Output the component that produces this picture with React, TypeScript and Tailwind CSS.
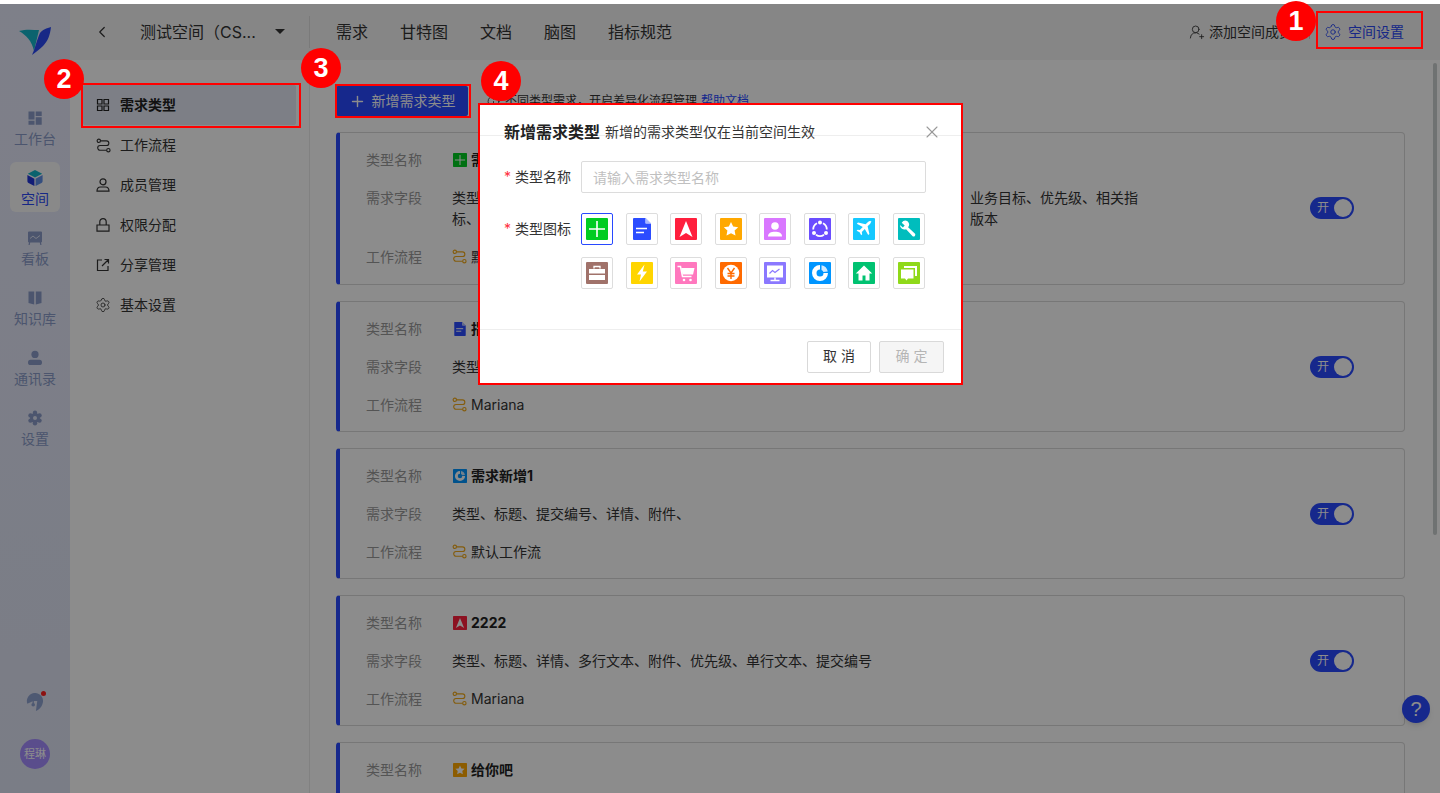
import { ReactNode } from "react";
import { ChevronLeft, Plus, Settings, UserRoundPlus, X, Info } from "lucide-react";

const cjk = "font-['Inter','Noto_Sans_CJK_SC',sans-serif]";

const FlowIcon = ({ className }: { className?: string }) => (
  <svg viewBox="0 0 16 16" fill="none" stroke="currentColor" strokeWidth="1.2" className={className}>
    <circle cx="3" cy="3" r="1.8" />
    <circle cx="13.2" cy="13" r="1.8" />
    <path d="M4.8 3h6.4a2.5 2.5 0 0 1 0 5H4.3a2.5 2.5 0 0 0 0 5h7" />
  </svg>
);

const glyphs: Record<string, { bg: string; glyph: ReactNode }> = {
  plus: {
    bg: "#00cc22",
    glyph: <path d="M11 3v16M3 11h16" stroke="#fff" strokeWidth="1.6" fill="none" />,
  },
  doc: {
    bg: "transparent",
    glyph: (
      <>
        <path d="M2.5 0h12L20 5.5V21a1 1 0 0 1-1 1H3a1 1 0 0 1-1-1V.5z" fill="#2b4cff" />
        <path d="M14.5 0L20 5.5h-5.5z" fill="#fff" />
        <path d="M15 0.6L19.4 5H15z" fill="#a9b8ff" />
        <path d="M5 10.5h11M5 14.5h8" stroke="#fff" strokeWidth="1.5" />
      </>
    ),
  },
  arrow: { bg: "#ff1f3d", glyph: <path d="M11 3L17.500 19L11 15L4.500 19z" fill="#fff" /> },
  star: {
    bg: "#ffa800",
    glyph: <path d="M11 4l2.200 4.500 5 .7-3.600 3.400.9 5L11 15.200l-4.500 2.400.9-5-3.600-3.400 5-.7z" fill="#fff" />,
  },
  user: {
    bg: "#d977ff",
    glyph: (
      <>
        <circle cx="11" cy="8" r="3.800" fill="#fff" />
        <path d="M4 18.500c0-3.500 3-4.800 7-4.800s7 1.300 7 4.800z" fill="#fff" />
      </>
    ),
  },
  ring: {
    bg: "#6a4dff",
    glyph: (
      <>
        <path d="M8 5.300a7 7 0 0 0-3.800 6.300M14 5.300a7 7 0 0 1 3.800 6.300M7 16.800a7 7 0 0 0 8 0" fill="none" stroke="#fff" strokeWidth="1.800" />
        <circle cx="11" cy="4.600" r="2" fill="#fff" />
        <circle cx="5" cy="15" r="2" fill="#fff" />
        <circle cx="17" cy="15" r="2" fill="#fff" />
      </>
    ),
  },
  plane: {
    bg: "#14c8ff",
    glyph: (
      <path
        d="M18.500 3.500c-1-1-2.500-.6-3.500.4l-2.400 2.400L5 4.500 3.800 5.700l6 3.400-3 3-2.200-.4-1 1 3 1.600 1.600 3 1-1-.4-2.200 3-3 3.400 6 1.200-1.200-1.800-7.600 2.400-2.400c1-1 1.400-2.500.5-3.400z"
        fill="#fff"
      />
    ),
  },
  wrench: {
    bg: "#00bdbd",
    glyph: (
      <path
        d="M9.500 3.200a4.600 4.600 0 0 0-5.800 1.600l3 2.600-1.800 2-3-2.400a4.600 4.600 0 0 0 6.200 4.200l6.300 6.800c.7.700 1.800.7 2.400 0 .7-.6.700-1.700 0-2.400l-6.700-6.300a4.600 4.600 0 0 0-.6-6.100z"
        fill="#fff"
      />
    ),
  },
  case: {
    bg: "#a0726a",
    glyph: (
      <>
        <path d="M8 6.500V4.500h6v2" stroke="#fff" strokeWidth="1.300" fill="none" />
        <path d="M3 7h16v4.600H3zM3 13h16v5H3z" fill="#fff" />
      </>
    ),
  },
  bolt: { bg: "#ffd500", glyph: <path d="M13.500 2.500L6 12.500H10L8.500 19.500L16 9.500H11.800z" fill="#fff" /> },
  cart: {
    bg: "#ff78be",
    glyph: (
      <>
        <path d="M2.500 4.500h3l2 10h9" stroke="#fff" strokeWidth="1.500" fill="none" />
        <path d="M6.200 6h13.300l-1.500 6.500H7.500z" fill="#fff" />
        <circle cx="9" cy="18" r="1.300" fill="#fff" />
        <circle cx="15.500" cy="18" r="1.300" fill="#fff" />
      </>
    ),
  },
  yen: {
    bg: "#ff6a00",
    glyph: (
      <>
        <circle cx="11" cy="11" r="8.300" fill="#fff" />
        <path d="M7.500 6l3.500 5 3.500-5M11 11v6M7.500 11.500h7M7.500 14h7" stroke="#ff6a00" strokeWidth="1.400" fill="none" />
      </>
    ),
  },
  screen: {
    bg: "#8b78ff",
    glyph: (
      <>
        <rect x="3" y="3.500" width="16" height="12" fill="#fff" />
        <path d="M5.500 11.500l3-3 2.500 2 4.500-3.500" stroke="#8b78ff" strokeWidth="1.200" fill="none" />
        <path d="M11 15.500v2.500M6.500 18.500h9" stroke="#fff" strokeWidth="1.400" />
      </>
    ),
  },
  pie: {
    bg: "#0095ff",
    glyph: (
      <>
        <path d="M11 3a8 8 0 1 0 8 8h-4.500A3.500 3.500 0 1 1 11 7.500z" fill="#fff" />
        <path d="M12.500 3.200A8 8 0 0 1 18.800 9.500l-4.400.4a3.600 3.600 0 0 0-1.900-2z" fill="#cfeaff" />
      </>
    ),
  },
  home: {
    bg: "#00c271",
    glyph: <path d="M11 3.500L2.800 11.500h2.700V18.500h4v-5h3v5h4v-7h2.700z" fill="#fff" />,
  },
  chat: {
    bg: "#8fd919",
    glyph: (
      <>
        <path d="M6 4h13v10h-2V6H6z" fill="#fff" />
        <path d="M3 7.500h12.500v9H10l-1.500 2-1.500-2H3z" fill="#fff" />
      </>
    ),
  },
};

const pickerIcons = ["plus", "doc", "arrow", "star", "user", "ring", "plane", "wrench", "case", "bolt", "cart", "yen", "screen", "pie", "home", "chat"];

const TypeIcon = ({ name, size }: { name: string; size: number }) => {
  const icon = glyphs[name];
  return (
    <svg viewBox="0 0 22 22" width={size} height={size} className="shrink-0">
      <rect width="22" height="22" rx="1" fill={icon.bg} />
      {icon.glyph}
    </svg>
  );
};

const navItems: { label: string; active?: boolean; icon: ReactNode }[] = [
  {
    label: "工作台",
    icon: (
      <svg viewBox="0 0 16 16" className="size-4 fill-current">
        <path d="M1.500 1.500h6v8h-6zM8.700 1.500h6v4.500h-6zM1.500 10.700h6v4h-6zM8.700 7.200h6v7.500h-6z" />
      </svg>
    ),
  },
  {
    label: "空间",
    active: true,
    icon: (
      <svg viewBox="0 0 16 16" className="size-4">
        <path d="M8 0l7.200 3.800L8 7.600.8 3.800z" fill="#14b5c9" />
        <path d="M.4 5l7 3.700V16l-5.900-3A2 2 0 0 1 .4 11.200z" fill="#2236d8" />
        <path d="M15.600 5l-7 3.700V16l5.900-3a2 2 0 0 0 1.100-1.800z" fill="#5f8fe8" />
      </svg>
    ),
  },
  {
    label: "看板",
    icon: (
      <svg viewBox="0 0 16 16" className="size-4 fill-current">
        <path d="M2 1.500h12a1 1 0 0 1 1 1v9a1 1 0 0 1-1 1l.5 2.500h-1.200l-.5-2.500H3.200l-.5 2.500H1.500l.5-2.500a1 1 0 0 1-1-1v-9a1 1 0 0 1 1-1z" />
        <path d="M3 8.500l3-2.500 3 2.500 4-3" stroke="#dfe3f4" strokeWidth="1" fill="none" />
      </svg>
    ),
  },
  {
    label: "知识库",
    icon: (
      <svg viewBox="0 0 16 16" className="size-4 fill-current">
        <path d="M1.500 1.500h5.700v13L1.500 13zM8.800 1.500h5.700V13l-5.700 1.500z" />
      </svg>
    ),
  },
  {
    label: "通讯录",
    icon: (
      <svg viewBox="0 0 16 16" className="size-4 fill-current">
        <circle cx="8" cy="4.400" r="3.600" />
        <rect x="1" y="9.800" width="14" height="5.200" rx="2.600" />
      </svg>
    ),
  },
  {
    label: "设置",
    icon: (
      <svg viewBox="0 0 16 16" className="size-4 fill-current">
        <circle cx="8" cy="8" r="5" />
        <circle cx="8" cy="2.800" r="2.200" />
        <circle cx="8" cy="13.200" r="2.200" />
        <circle cx="3.500" cy="5.400" r="2.200" />
        <circle cx="12.500" cy="5.400" r="2.200" />
        <circle cx="3.500" cy="10.600" r="2.200" />
        <circle cx="12.500" cy="10.600" r="2.200" />
        <circle cx="8" cy="8" r="2" fill="#dfe3f4" />
      </svg>
    ),
  },
];

const menuIconProps = {
  viewBox: "0 0 16 16",
  fill: "none",
  stroke: "currentColor",
  strokeWidth: 1.2,
  className: "size-4",
};

const menuItems: { label: string; icon: ReactNode; active?: boolean }[] = [
  {
    label: "需求类型",
    active: true,
    icon: (
      <svg {...menuIconProps}>
        <path d="M2.500 2.500h4.500v4.500h-4.500zM9 2.500h4.500v4.500H9zM2.500 9h4.500v4.500h-4.500zM9 9h4.500v4.500H9z" />
      </svg>
    ),
  },
  { label: "工作流程", icon: <FlowIcon className="size-[15px]" /> },
  {
    label: "成员管理",
    icon: (
      <svg {...menuIconProps}>
        <circle cx="8" cy="4.800" r="3" />
        <path d="M2 14.200c0-2.800 1.500-4.200 3.500-4.200h5c2 0 3.500 1.400 3.500 4.200z" />
      </svg>
    ),
  },
  {
    label: "权限分配",
    icon: (
      <svg {...menuIconProps}>
        <path d="M2 8h12v6.200H2zM4.800 8V4.800a3.200 3.200 0 0 1 6.400 0V8" />
      </svg>
    ),
  },
  {
    label: "分享管理",
    icon: (
      <svg {...menuIconProps}>
        <path d="M7 3H2.500v10.500H13V9M9.500 2.500h4v4M13.500 2.500L7 9" />
      </svg>
    ),
  },
  { label: "基本设置", icon: <Settings size={18} strokeWidth={1.2} /> },
];

const cards = [
  {
    name: "需求类型",
    icon: "plus",
    flow: "默认工作流",
    fields:
      "类型、标题、提交编号、详情、附件、负责人、处理人、开始时间、抄送人、模块、业务目标、优先级、相关指标、截止时间、预估工时、实际工时、所属迭代、所属项目、关联需求、需求来源、版本",
    extra: "pb-px",
  },
  { name: "指标需求", icon: "doc", flow: "Mariana", fields: "类型、标题、提交编号、详情、附件、" },
  { name: "需求新增1", icon: "pie", flow: "默认工作流", fields: "类型、标题、提交编号、详情、附件、" },
  { name: "2222", icon: "arrow", flow: "Mariana", fields: "类型、标题、详情、多行文本、附件、优先级、单行文本、提交编号" },
  { name: "给你吧", icon: "star", flow: "默认工作流", fields: "类型、标题、提交编号、详情、附件、" },
];

const TypeCard = ({ card }: { card: (typeof cards)[number] }) => (
  <div className={`flex shrink-0 items-center justify-between rounded-[4px] border border-[#d9d9d9] border-l-4 border-l-[#2849ff] pr-[50px] pl-[26px] ${card.extra ?? ""}`}>
    <div className="flex flex-col gap-[17px] py-[16px] text-sm leading-[21px]">
      <div className="flex">
        <span className="w-[86px] shrink-0 text-[#999]">类型名称</span>
        <span className="flex items-center gap-[4px] pl-px font-bold text-[#222]">
          <TypeIcon name={card.icon} size={14} />
          {card.name}
        </span>
      </div>
      <div className="flex">
        <span className="w-[86px] shrink-0 text-[#999]">需求字段</span>
        <span className="w-[690px] text-[#333]">{card.fields}</span>
      </div>
      <div className="flex">
        <span className="w-[86px] shrink-0 text-[#999]">工作流程</span>
        <span className="flex items-center gap-1 text-[#333]">
          <FlowIcon className="size-[15px] text-[#f0a818]" />
          {card.flow}
        </span>
      </div>
    </div>
    <div className="flex h-[22px] w-[44px] items-center justify-between rounded-full bg-[#2849ff] pr-[2px] pl-[7px] text-xs text-white">
      开<span className="size-[18px] rounded-full bg-white" />
    </div>
  </div>
);

const Badge = ({ n, className }: { n: number; className: string }) => (
  <div className={`absolute flex size-10 items-center justify-center rounded-full bg-[#ff0000] font-['Liberation_Sans',sans-serif] text-[27px] font-bold text-white ${className}`}>
    {n}
  </div>
);

const App = () => {
  return (
    <div className={`relative h-[793px] overflow-hidden bg-white pt-[4px] ${cjk}`}>
      <div className="relative flex h-[789px]">
        {/* left nav */}
        <aside className="flex w-[70px] shrink-0 flex-col items-center bg-gradient-to-b from-[#e6e9fa] to-[#dfe3f4] text-[#8a9bc8]">
          <svg viewBox="0 0 32 28" className="mt-[23px] -ml-px h-[28px] w-[32px] shrink-0">
            <path d="M0 4C7 2 14 3 20 3L15 24C13 14 7 8 0 4z" fill="#14b5c9" />
            <path d="M32 0C31 8 29 14 24 19C21 22 17 25 13 28C16 22 18 12 21 6C23 3 28 1 32 0z" fill="#2a49f5" />
          </svg>
          <div className="mt-[47px] flex flex-col items-center">
            {navItems.map((item) => (
              <div
                key={item.label}
                className={`mb-[10px] flex size-[50px] flex-col items-center rounded-md pt-[8px] text-sm leading-5 ${item.active ? "bg-[#fafafa] text-[#2a49f5]" : ""}`}
              >
                {item.icon}
                <span className="mt-[3px] whitespace-nowrap">{item.label}</span>
              </div>
            ))}
          </div>
          <div className="mt-auto flex flex-col items-center gap-[28px] pb-[24px]">
            <div className="relative">
              <svg viewBox="0 0 20 20" className="size-[18px]">
                <path d="M1.500 12A9 9 0 1 1 18 13C17 16 14 18.500 11 20L12.500 9H8L1.500 12z" fill="#8fa3d0" />
                <path d="M8 9v3" stroke="#8fa3d0" strokeWidth="1.500" />
                <circle cx="8" cy="13" r="2" fill="#8fa3d0" />
              </svg>
              <span className="absolute -top-[2px] -right-[2px] size-[5px] rounded-full bg-[#ff2020]" />
            </div>
            <div className="flex size-[30px] items-center justify-center rounded-full bg-[#a48cff] text-[11px] text-white">
              程琳
            </div>
          </div>
        </aside>

        <div className="flex min-w-0 flex-1 flex-col">
          {/* top bar */}
          <header className="flex h-[56px] shrink-0 items-center bg-[#f5f5f5] text-[#333]">
            <div className="flex h-full w-[239px] items-center pb-[1px]">
              <ChevronLeft size={18} strokeWidth={1.6} className="ml-[23px]" />
              <span className="ml-[29px] w-[122px] text-base whitespace-nowrap">测试空间（CS...</span>
              <span className="ml-[13px] size-0 border-x-[5px] border-t-[5px] border-x-transparent border-t-[#333]" />
            </div>
            <div className="h-[32px] w-px bg-[#dedede]" />
            <nav className="ml-[26px] flex gap-8 text-base">
              <span>需求</span>
              <span>甘特图</span>
              <span>文档</span>
              <span>脑图</span>
              <span>指标规范</span>
            </nav>
            <div className="ml-auto flex items-center pr-[36px] text-sm">
              <UserRoundPlus size={16} strokeWidth={1.3} />
              <span className="ml-[4px] whitespace-nowrap">添加空间成员</span>
              <span className="ml-[16px] h-[14px] w-px bg-[#ccc]" />
              <Settings size={18} strokeWidth={1.2} className="ml-[14px] text-[#2a49f5]" />
              <span className="ml-[6px] text-[#2a49f5]">空间设置</span>
            </div>
          </header>

          <div className="flex min-h-0 flex-1">
            {/* settings menu */}
            <div className="w-[240px] shrink-0 border-r border-[#ececec] px-[13px] pt-[25px] text-sm">
              {menuItems.map((item) => (
                <div
                  key={item.label}
                  className={`flex h-[40px] items-center gap-[9px] rounded-[2px] px-[12px] ${item.active ? "bg-[#e4e8f4] font-semibold text-[#222]" : "text-[#333]"}`}
                >
                  <span className="flex w-[16px] justify-center">{item.icon}</span>
                  {item.label}
                </div>
              ))}
            </div>

            {/* card list */}
            <main className="relative flex min-w-0 flex-1 flex-col gap-4 overflow-hidden pt-[26px] pr-[35px] pl-[26px]">
              <div className="flex shrink-0 items-center">
                <button className="flex h-[30px] w-[132px] items-center justify-center gap-[6px] rounded-[2px] bg-[#2849ff] text-sm text-white">
                  <Plus size={17} strokeWidth={2} />
                  新增需求类型
                </button>
                <Info size={13} strokeWidth={1.5} className="ml-[19px] text-[#333]" />
                <span className="ml-[5px] text-xs text-[#333]">不同类型需求，开启差异化流程管理</span>
                <span className="ml-[4px] text-xs text-[#2849ff]">帮助文档</span>
              </div>
              {cards.map((card) => (
                <TypeCard key={card.name} card={card} />
              ))}
              <div className="absolute top-[3px] right-[3px] h-[472px] w-[4px] rounded-full bg-[#cacfcf]" />
            </main>
          </div>
        </div>
      </div>

      <div className="absolute top-[695px] left-[1402px] flex size-7 items-center justify-center rounded-full bg-[#2849ff] font-['Liberation_Sans',sans-serif] text-xl text-white shadow-md">
        ?
      </div>

      {/* modal mask */}
      <div className="absolute inset-x-0 top-[4px] bottom-0 bg-black/45" />

      {/* modal */}
      <div className="absolute top-[103px] left-[478px] flex h-[282px] w-[485px] flex-col border-2 border-[#ff0000] bg-white text-sm">
        <div className="flex h-[31px] shrink-0 items-start border-b border-[#eeeeee] pt-[15px] pr-[19px] pl-[24px]">
          <span className="text-base leading-6 font-bold text-[#222]">新增需求类型</span>
          <span className="ml-[5px] leading-6 text-[#333]">新增的需求类型仅在当前空间生效</span>
          <X size={20} strokeWidth={1.3} className="mt-[2px] ml-auto text-[#999]" />
        </div>
        <div className="flex flex-1 flex-col gap-5 pt-[25px] pr-[35px] pl-[24px]">
          <div className="flex items-center">
            <span className="w-[11px] text-[#ff3040]">*</span>
            <span className="w-[66px] text-[#333]">类型名称</span>
            <input
              readOnly
              placeholder="请输入需求类型名称"
              className="h-[32px] flex-1 rounded-[2px] border border-[#dcdcdc] px-[11px] text-sm placeholder:text-[#c0c0c0]"
            />
          </div>
          <div className="flex items-start">
            <span className="w-[11px] leading-[32px] text-[#ff3040]">*</span>
            <span className="w-[66px] leading-[32px] text-[#333]">类型图标</span>
            <div className="grid flex-1 grid-cols-[repeat(8,32px)] justify-between gap-y-3 pr-px">
              {pickerIcons.map((name) => (
                <div
                  key={name}
                  className={`flex size-8 items-center justify-center rounded-[2px] border ${name === "plus" ? "border-[#2849ff]" : "border-[#dddddd]"}`}
                >
                  <TypeIcon name={name} size={22} />
                </div>
              ))}
            </div>
          </div>
        </div>
        <div className="flex h-[54px] shrink-0 items-center justify-end gap-2 border-t border-[#eeeeee] pr-[17px]">
          <button className="h-[32px] w-[64px] rounded-[2px] border border-[#d9d9d9] pb-[2px] text-[#333]">取 消</button>
          <button className="h-[32px] w-[65px] rounded-[2px] border border-[#d9d9d9] bg-[#f5f5f5] pb-[2px] text-[#b5b5b5]">确 定</button>
        </div>
      </div>

      {/* annotation boxes */}
      <div className="absolute top-[11px] left-[1316px] h-[38px] w-[107px] border-2 border-[#ff0000]" />
      <div className="absolute top-[83px] left-[81px] h-[45px] w-[220px] border-2 border-[#ff0000]" />
      <div className="absolute top-[84px] left-[335px] h-[34px] w-[136px] border-2 border-[#ff0000]" />
      <Badge n={1} className="top-[1px] left-[1276px]" />
      <Badge n={2} className="top-[59px] left-[44px]" />
      <Badge n={3} className="top-[48px] left-[301px]" />
      <Badge n={4} className="top-[61px] left-[481px]" />
    </div>
  );
};

export default App;
